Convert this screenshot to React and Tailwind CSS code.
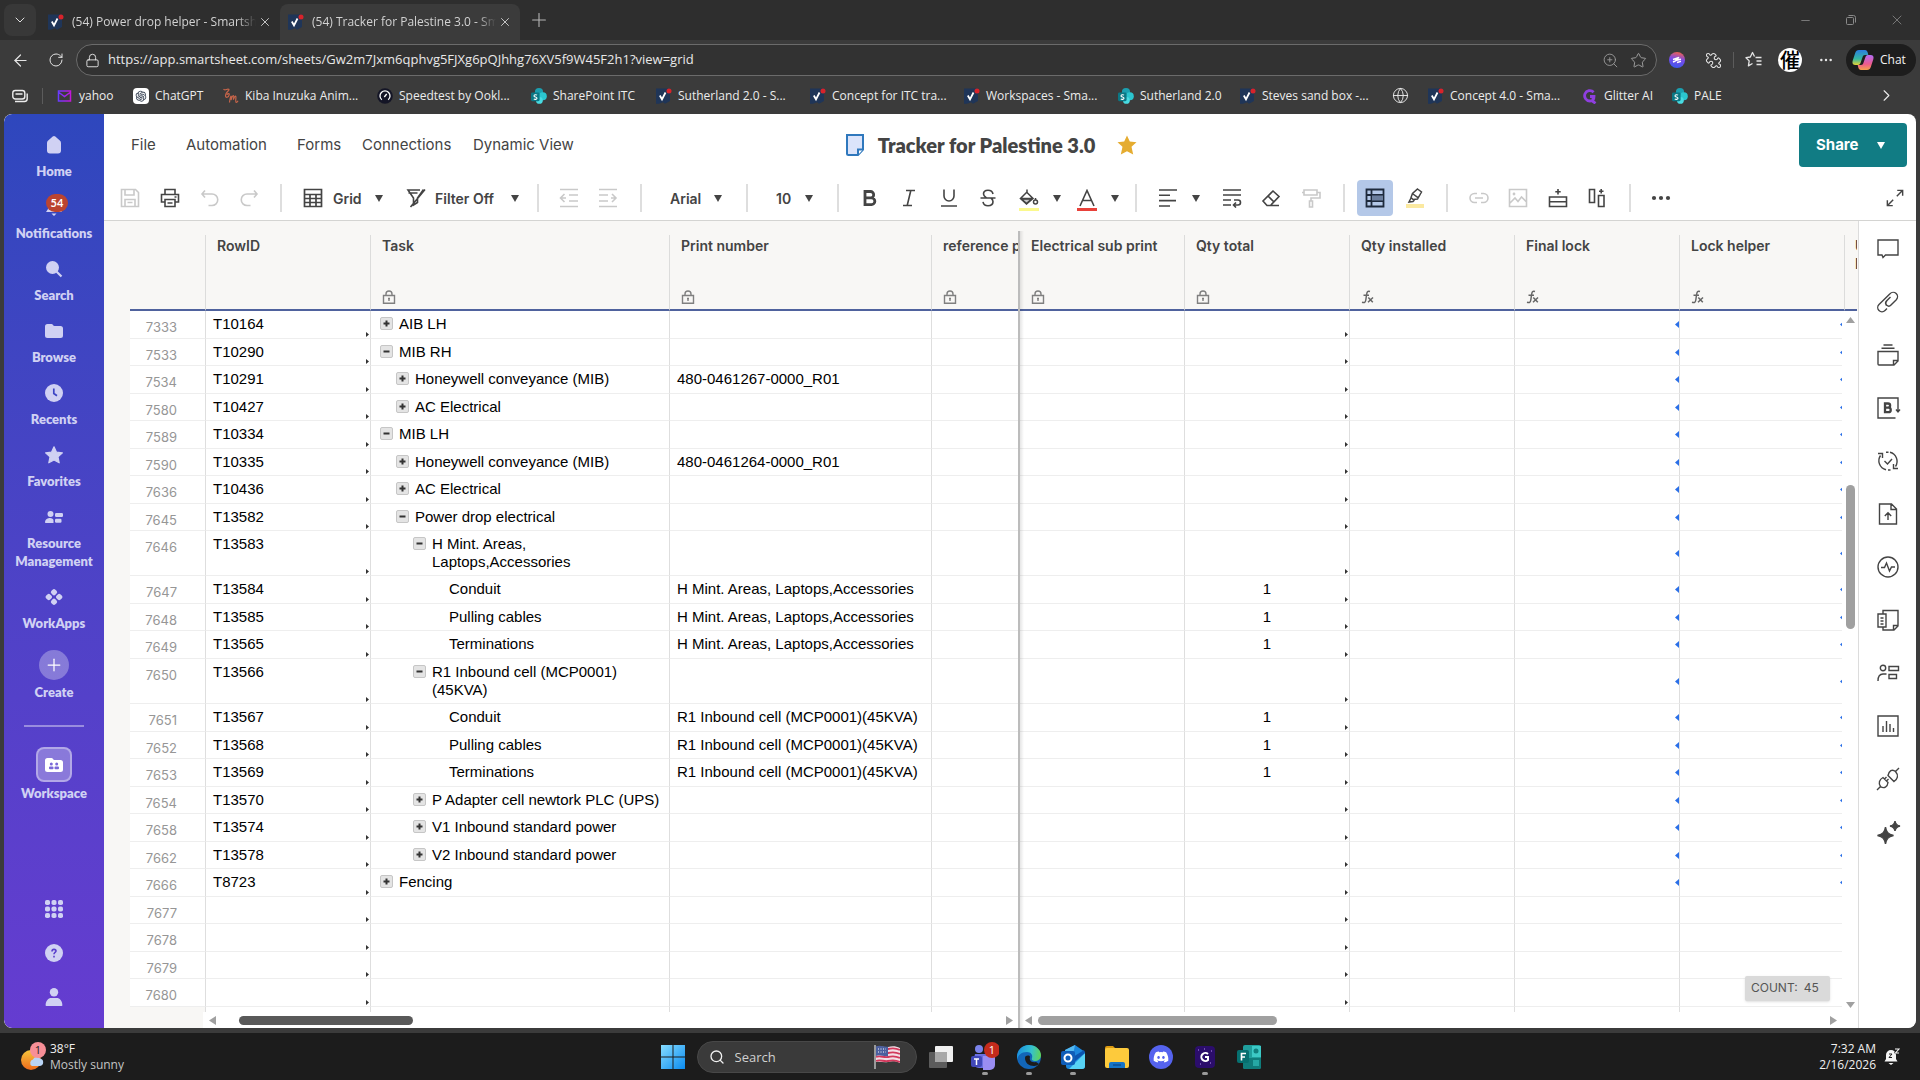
import React from 'react';
import { AiOutlineOpenAI } from 'react-icons/ai';
import { FaDiscord } from 'react-icons/fa';
import {
  ArrowLeft, ChevronDown, ChevronRight, Globe, Lock, Minus, MoreHorizontal, Plus, Puzzle, RotateCw, Search, Star, X, ZoomIn,
} from 'lucide-react';

const UI = "font-['Open_Sans',sans-serif]";
const INTER = "font-['Inter',sans-serif]";
const ARIAL = "font-['Liberation_Sans',Arial,sans-serif]";
const LATO = "font-['Lato',sans-serif]";

/* ---------- small brand marks ---------- */

function SmartsheetMark() {
  return (
    <svg className="h-4 w-4 flex-none" viewBox="0 0 16 16">
      <path d="M0 0.5h14v12.6L9 15.7 7 14.2l-4 1.6H0z" fill="#1f3558" />
      <path d="M3.8 7.500l2.200 3.800L9.500 4.500" fill="none" stroke="#fff" strokeWidth="1.800" />
      <circle cx="13" cy="2.900" r="2.500" fill="#d8232a" />
    </svg>
  );
}

function SharePointMark() {
  return (
    <svg className="h-4 w-4 flex-none" viewBox="0 0 16 16">
      <circle cx="8" cy="4.2" r="4.1" fill="#1b9fb0" />
      <circle cx="11.8" cy="8.2" r="4" fill="#2bc5cf" />
      <circle cx="8.4" cy="12.4" r="3.4" fill="#48dbe2" />
      <rect x="0" y="4.6" width="8.6" height="8.6" rx="1.4" fill="#0b7784" />
      <path d="M6 7.2C5.2 6.5 3 6.6 3 7.9c0 1.4 3 .9 3 2.4 0 1.300-2.400 1.400-3.200.6" fill="none" stroke="#fff" strokeWidth="1.1" />
    </svg>
  );
}

function YahooMark() {
  return (
    <svg className="h-4 w-4 flex-none" viewBox="0 0 16 16">
      <defs>
        <linearGradient id="ymail" x1="0" y1="0" x2="1" y2="0">
          <stop offset="0" stopColor="#6a3bff" />
          <stop offset="1" stopColor="#c316d8" />
        </linearGradient>
      </defs>
      <path d="M1.500 3h12v10h-12zM2 4.500l5.500 4 5.500-4" fill="none" stroke="url(#ymail)" strokeWidth="1.500" />
    </svg>
  );
}

function OpenAiMark() {
  return (
    <span className="flex h-4 w-4 flex-none items-center justify-center rounded-sm bg-white text-gray-700">
      <AiOutlineOpenAI size={14} />
    </span>
  );
}

function CrunchMark() {
  return (
    <svg className="h-4 w-4 flex-none" viewBox="0 0 16 16" fill="none" stroke="#c8654a" strokeWidth="1.200">
      <path d="M.5 1c1.500 2.500 3.500-.8 5.200.3C7 2.500 2.500 4 2.500 7.500c0 3 3.200 2 3.700-.8.3-1.700-2-1.500-2.200.3" />
      <path d="M6.500 14.500c.5-4 1-6.500 1.500-6.500s.5 1.500 0 4c1-3 1.800-4.500 2.500-4.300.6.2.2 2-.2 4 1-2.500 1.800-3.700 2.500-3.500.8.300-.8 5 .2 6 .6.5 1.500-.5 2-1.500" />
    </svg>
  );
}

function SpeedtestMark() {
  return (
    <svg className="h-4 w-4 flex-none" viewBox="0 0 16 16">
      <circle cx="8" cy="8" r="7.800" fill="#141526" />
      <path d="M4.800 11.800a5 5 0 1 1 6.400 0M7.300 9l2.400-3" fill="none" stroke="#fff" strokeWidth="1.300" />
    </svg>
  );
}

function GlitterMark() {
  return (
    <svg className="h-4 w-4 flex-none" viewBox="0 0 16 16" fill="none" stroke="#8f3fe0" strokeWidth="2.800">
      <path d="M11.600 4.200A5.200 5.200 0 1 0 8 13c2.500 0 4-1.500 4-4.500H8M11 9v4.500l2.500 1.800" />
    </svg>
  );
}

/* ---------- browser ---------- */

function Tab({ title, active }) {
  return (
    <div className={active
      ? 'flex h-9 w-60 flex-none items-center rounded-t-lg bg-[#3b3b3b] pl-2 pr-2'
      : 'flex h-9 w-60 flex-none items-center pl-2 pr-2'}>
      <SmartsheetMark />
      <span className="ml-2 w-[184px] overflow-hidden whitespace-nowrap text-xs text-[#d2d2d2] [mask-image:linear-gradient(to_right,black_90%,transparent)]">{title}</span>
      <button aria-label="Close tab" className="ml-auto text-[#d8d8d8]"><X size={14} strokeWidth={1.500} /></button>
    </div>
  );
}

function TabStrip() {
  return (
    <div className="flex h-10 flex-none items-end bg-[#2e2e2e] pl-1">
      <button aria-label="Tab actions" className="mb-1 mr-1 flex h-8 w-8 flex-none items-center justify-center rounded-lg bg-[#383838] text-[#e0e0e0]">
        <ChevronDown size={16} strokeWidth={1.500} />
      </button>
      <Tab title="(54) Power drop helper - Smartshe" />
      <Tab title="(54) Tracker for Palestine 3.0 - Sma" active />
      <button aria-label="New tab" className="mb-[9px] ml-2 text-[#b5b5b5]"><Plus size={22} strokeWidth={1.200} /></button>
      <div className="ml-auto flex h-10 items-center text-[#8a8a8a]">
        <button aria-label="Minimize" className="flex w-[46px] justify-center"><Minus size={13} strokeWidth={1.500} /></button>
        <button aria-label="Restore" className="flex w-[46px] justify-center">
          <svg width="12" height="12" viewBox="0 0 12 12" fill="none" stroke="currentColor"><rect x="1.500" y="3.500" width="7" height="7" rx="1" /><path d="M3.500 1.500h5a2 2 0 0 1 2 2v5" /></svg>
        </button>
        <button aria-label="Close" className="flex w-[46px] justify-center"><X size={16} strokeWidth={1.200} /></button>
      </div>
    </div>
  );
}

function AddressBar() {
  return (
    <div className="flex h-10 flex-none items-center bg-[#3b3b3b] pl-2 pr-1 text-[#e4e4e4]">
      <button aria-label="Back" className="flex w-6 justify-center"><ArrowLeft size={19} strokeWidth={1.500} /></button>
      <button aria-label="Reload" className="ml-3 flex w-6 justify-center"><RotateCw size={16} strokeWidth={1.500} /></button>
      <div className="ml-2 flex h-8 min-w-0 flex-1 items-center rounded-full border border-[#6b6b6b] bg-[#323232] pl-2 pr-1">
        <Lock size={15} strokeWidth={1.500} className="flex-none" />
        <input aria-label="Address" readOnly className="ml-2 min-w-0 flex-1 bg-transparent text-[13px] text-[#e8e8e8] outline-none" defaultValue="https://app.smartsheet.com/sheets/Gw2m7Jxm6qphvg5FJXg6pQJhhg76XV5f9W45F2h1?view=grid" />
        <button aria-label="Zoom" className="flex w-7 justify-center text-[#9a9a9a]"><ZoomIn size={17} strokeWidth={1.300} /></button>
        <button aria-label="Add to favorites" className="flex w-7 justify-center text-[#a5a5a5]"><Star size={17} strokeWidth={1.300} /></button>
      </div>
      <button aria-label="Extension" className="ml-3 flex w-4 justify-center">
        <svg width="16" height="16" viewBox="0 0 16 16">
          <defs><linearGradient id="ext" x1="0.600" y1="0" x2="0.400" y2="1"><stop offset="0" stopColor="#f0604f" /><stop offset="0.450" stopColor="#7a4be8" /><stop offset="1" stopColor="#3d57ee" /></linearGradient></defs>
          <circle cx="8" cy="8" r="8" fill="url(#ext)" />
          <path d="M4 7.500l6-2-3.500 3 5.500-1.200M4 10l2.500-1M8 10.500l4-1.200" stroke="#fff" strokeWidth="1.400" fill="none" />
        </svg>
      </button>
      <button aria-label="Extensions" className="ml-2 flex w-10 justify-center"><Puzzle size={17} strokeWidth={1.500} className="-rotate-90" /></button>
      <span className="h-4 w-px bg-[#5c5c5c]" />
      <button aria-label="Favorites" className="flex w-10 justify-center">
        <svg width="18" height="18" viewBox="0 0 18 18" fill="none" stroke="currentColor" strokeWidth="1.300" strokeLinejoin="round"><path d="M9.500 5.500L7.500 1.500 5.300 6 1 6.700l3.200 3.200-.8 5L7.500 12.500M10.500 6.500h6M11.500 10h5M11.500 13.500h5" /></svg>
      </button>
      <button aria-label="Profile" className="ml-1 flex h-6 w-6 items-center justify-center overflow-hidden rounded-full bg-white font-['Noto_Sans_CJK_JP',sans-serif] text-[20px] font-medium leading-6 text-black">催</button>
      <button aria-label="Settings" className="flex w-12 justify-center"><MoreHorizontal size={16} strokeWidth={1.700} /></button>
      <button className="-ml-1 flex h-8 w-[70px] flex-none items-center rounded-full bg-[#1d1d1d] pl-[6px] text-[12px] text-[#f2f2f2]">
        <svg width="22" height="20" viewBox="0 0 22 20" className="mr-[6px] flex-none">
          <defs>
            <linearGradient id="cop1" x1="0" y1="0" x2="0" y2="1"><stop offset="0" stopColor="#2a7de1" /><stop offset="0.600" stopColor="#35b8a0" /><stop offset="1" stopColor="#e8d434" /></linearGradient>
            <linearGradient id="cop2" x1="0" y1="0" x2="0" y2="1"><stop offset="0" stopColor="#b26cf5" /><stop offset="0.600" stopColor="#ee5a8d" /><stop offset="1" stopColor="#f6a04a" /></linearGradient>
          </defs>
          <path d="M7 0h6c1.500 0 2.300 1 2.700 2.500L16.300 5H13c-1.500 0-2 .8-2.400 2L8.700 12.500C8.200 14 7.500 15 6 15H3.500C1 15 0 13.500.6 11L3.200 3C3.800 1 5 0 7 0z" fill="url(#cop1)" />
          <path d="M15 20H9c-1.500 0-2.300-1-2.700-2.500L5.700 15H9c1.500 0 2-.8 2.400-2l1.900-5.500C13.800 6 14.500 5 16 5h2.500C21 5 22 6.500 21.400 9l-2.600 8C18.200 19 17 20 15 20z" fill="url(#cop2)" />
        </svg>
        Chat
      </button>
    </div>
  );
}

const BOOKMARKS = [
  ['yahoo', YahooMark, 'w-[76px]'],
  ['ChatGPT', OpenAiMark, 'w-[90px]'],
  ['Kiba Inuzuka Anim...', CrunchMark, 'w-[154px]'],
  ['Speedtest by Ookl...', SpeedtestMark, 'w-[154px]'],
  ['SharePoint ITC', SharePointMark, 'w-[125px]'],
  ['Sutherland 2.0 - S...', SmartsheetMark, 'w-[154px]'],
  ['Concept for ITC tra...', SmartsheetMark, 'w-[154px]'],
  ['Workspaces - Sma...', SmartsheetMark, 'w-[154px]'],
  ['Sutherland 2.0', SharePointMark, 'w-[122px]'],
  ['Steves sand box -...', SmartsheetMark, 'w-[152px]'],
  ['', null, 'w-[36px]'],
  ['Concept 4.0 - Sma...', SmartsheetMark, 'w-[154px]'],
  ['Glitter AI', GlitterMark, 'w-[90px]'],
  ['PALE', SharePointMark, 'w-[60px]'],
];

function Bookmarks() {
  return (
    <nav className="flex h-[34px] flex-none items-center overflow-hidden bg-[#3b3b3b] pb-[3px] pl-3 pr-6 text-[#ececec]">
      <svg className="h-4 w-4 flex-none" viewBox="0 0 16 16" fill="none" stroke="currentColor" strokeWidth="1.400"><rect x="0.800" y="2.500" width="12" height="8.500" rx="2.500" /><path d="M3.500 6h7M3 13.500h9.500a2.800 2.800 0 0 0 2.700-2.800V5.500" /></svg>
      <span className="ml-[14px] mr-[14px] h-4 w-px flex-none bg-[#5c5c5c]" />
      {BOOKMARKS.map(([label, Mark, w], i) => (
        <a key={i} href="#" aria-label={label || 'Web page'} className={`flex flex-none items-center gap-[6px] whitespace-nowrap text-xs ${w}`}>
          {Mark ? <Mark /> : <Globe size={17} strokeWidth={1.300} />}
          {label}
        </a>
      ))}
      <button aria-label="More bookmarks" className="ml-auto"><ChevronRight size={19} strokeWidth={1.400} /></button>
    </nav>
  );
}

/* ---------- app side navigation ---------- */

const S = 'h-[18px] w-[18px] fill-current';
const NAV = [
  ['Home', <svg className={S} viewBox="0 0 18 18"><path d="M7.700.6a2.200 2.200 0 0 1 2.600 0l4.500 4C15.600 5.300 16 6 16 7v7.500a3 3 0 0 1-3 3H5a3 3 0 0 1-3-3V7c0-1 .4-1.700 1.200-2.400z" /></svg>],
  ['Notifications', (
    <span className="relative">
      <svg className={S} viewBox="0 0 18 18"><path d="M9 0a6 6 0 0 1 6 6v5l2 3H1l2-3V6a6 6 0 0 1 6-6zM6.500 15.500h5L9 18z" /></svg>
      <span className="absolute -top-1 left-px flex h-[18px] w-[22px] items-center justify-center rounded-full bg-[#bb4430] text-[11px] font-bold text-white">54</span>
    </span>
  )],
  ['Search', <svg className={S} viewBox="0 0 18 18"><circle cx="7.500" cy="7.500" r="6.500" /><path d="M11 11l5.500 5.500" stroke="currentColor" strokeWidth="2.200" /></svg>],
  ['Browse', <svg className={S} viewBox="0 0 18 18"><path d="M2.500 2h4c1.500 0 1.500 2 3 2h6A2.500 2.500 0 0 1 18 6.500v7a2.500 2.500 0 0 1-2.500 2.500h-13A2.500 2.500 0 0 1 0 13.500v-9A2.500 2.500 0 0 1 2.500 2z" /></svg>],
  ['Recents', <svg className={S} viewBox="0 0 18 18"><circle cx="9" cy="9" r="9" /><path d="M8.800 4.500v5l3.200 2.300" stroke="#3c44c4" strokeWidth="1.700" fill="none" /></svg>],
  ['Favorites', <svg className={S} viewBox="0 0 18 18"><path d="M9 .8l2.500 5.400 5.900.7-4.400 4 1.200 5.900L9 14l-5.200 2.800L5 10.900l-4.400-4 5.900-.7z" stroke="currentColor" strokeWidth="1.200" strokeLinejoin="round" /></svg>],
  ['Resource Management', <svg className={S} viewBox="0 0 18 18"><circle cx="5.500" cy="6" r="3" /><path d="M0 14.500c0-3.500 3-4.500 5-4.500s3.500 1 3.500 2.500V15H.5z" /><rect x="10" y="5" width="8" height="4" rx="1.200" /><rect x="10" y="10.800" width="6.500" height="4" rx="1.200" /></svg>],
  ['WorkApps', <svg className={S} viewBox="0 0 18 18"><g><rect x="6.200" y="1.400" width="5.600" height="5.600" rx="2" transform="rotate(45 9 4.200)" /><rect x="6.200" y="11" width="5.600" height="5.600" rx="2" transform="rotate(45 9 13.800)" /><rect x="1" y="6.200" width="5.600" height="5.600" rx="2" transform="rotate(45 3.800 9)" /><rect x="11.400" y="6.200" width="5.600" height="5.600" rx="2" transform="rotate(45 14.200 9)" /></g></svg>],
];

function SideNav() {
  return (
    <nav className={`flex w-[100px] flex-none flex-col items-center rounded-l-lg bg-linear-to-b from-[#2e47bd] to-[#653cd0] pb-[22px] pt-[22px] text-[13px] font-extrabold leading-[18px] text-[#d0d1f3] ${LATO}`}>
      <div className="flex flex-col gap-[18px]">
        {NAV.map(([label, icon]) => (
          <a key={label} href="#" className="flex w-[90px] flex-col items-center gap-2 text-center">
            <span className="flex h-[18px] items-center">{icon}</span>
            <span>{label}</span>
          </a>
        ))}
        <button className="flex flex-col items-center gap-[3px]">
          <span className="flex h-[30px] w-[30px] items-center justify-center rounded-full bg-white/30 text-white"><Plus size={20} strokeWidth={1.500} /></span>
          <span>Create</span>
        </button>
      </div>
      <span className="mt-6 h-[2px] w-[60px] flex-none bg-white/40" />
      <a href="#" className="mt-5 flex flex-col items-center gap-[2px]">
        <span className="flex h-[35px] w-9 items-center justify-center rounded-lg border-2 border-white/35 bg-white/30 text-white">
          <svg className={S} viewBox="0 0 18 18"><path d="M2.500 2h4c1.500 0 1.500 2 3 2h6A2.500 2.500 0 0 1 18 6.500v7a2.500 2.500 0 0 1-2.500 2.500h-13A2.500 2.500 0 0 1 0 13.500v-9A2.500 2.500 0 0 1 2.500 2z" /><g fill="#7a68d8"><circle cx="6.300" cy="8" r="1.500" /><circle cx="11.700" cy="8" r="1.500" /><rect x="4" y="10.500" width="4.500" height="2.800" rx="1" /><rect x="9.500" y="10.500" width="4.500" height="2.800" rx="1" /></g></svg>
        </span>
        <span>Workspace</span>
      </a>
      <div className="mt-auto flex flex-col gap-[26px]">
        <button aria-label="App launcher">
          <svg className={S} viewBox="0 0 18 18">{[0, 6.500, 13].map((x) => [0, 6.500, 13].map((y) => <rect key={x + '-' + y} x={x} y={y} width="5" height="5" rx="1.800" />))}</svg>
        </button>
        <button aria-label="Help">
          <svg className={S} viewBox="0 0 18 18"><circle cx="9" cy="9" r="9" /><path d="M7 7.500c0-3 4-2.600 4-.4 0 1.400-2 1.400-2 3.200M9 11.800v1.700" stroke="#5a40cc" strokeWidth="1.600" fill="none" /></svg>
        </button>
        <button aria-label="Account">
          <svg className={S} viewBox="0 0 18 18"><circle cx="9" cy="4.200" r="4.200" /><path d="M.6 17.500c0-5 3-7.500 5.400-7.500h6c2.400 0 5.400 2.500 5.400 7.500a1 1 0 0 1-1 .5H1.600a1 1 0 0 1-1-.5z" /></svg>
        </button>
      </div>
    </nav>
  );
}

/* ---------- sheet header and toolbar ---------- */

function SheetHeader() {
  const item = 'whitespace-nowrap';
  return (
    <header className="grid h-[62px] flex-none grid-cols-[1fr_auto_1fr] items-center">
      <nav className={`flex items-center pl-[27px] text-[15px] text-[#444] ${INTER}`}>
        <button className={`${item} w-[55px] text-left`}>File</button>
        <button className={`${item} w-[111px] text-left`}>Automation</button>
        <button className={`${item} w-[65px] text-left`}>Forms</button>
        <button className={`${item} w-[111px] text-left`}>Connections</button>
        <button className={item}>Dynamic View</button>
      </nav>
      <div className="flex items-center pr-[38px]">
        <svg width="20" height="24" viewBox="0 0 20 24" fill="#dbe4fb" stroke="#2f78bd" strokeWidth="2"><path d="M2 2h16v14.500L13 22H3.500A1.500 1.500 0 0 1 2 20.500z" /><path d="M18 16.500h-5V22" fill="#fff" /></svg>
        <h1 className={`ml-[13px] whitespace-nowrap text-[20px] font-extrabold text-[#444] ${LATO}`}>Tracker for Palestine 3.0</h1>
        <svg className="ml-[22px]" width="20" height="20" viewBox="0 0 20 20" fill="#e5ac30"><path d="M10 .5l2.800 6 6.700.7-5 4.500 1.700 7.800L10 16.200l-6.200 3.300 1.700-7.800-5-4.500 6.700-.7z" /></svg>
      </div>
      <div className="flex justify-end pr-[9px]">
        <button className={`flex h-11 w-[108px] items-center rounded bg-[#117c84] pl-[17px] text-[15px] font-bold text-white ${INTER}`}>
          Share<Caret className="ml-[18px]" />
        </button>
      </div>
    </header>
  );
}

function Caret({ className = '' }) {
  return <svg className={`flex-none ${className}`} width="8" height="7" viewBox="0 0 8 7" fill="currentColor"><path d="M0 0h8L4 7z" /></svg>;
}

function Sep({ w = 'w-[26px]' }) {
  return <span className={`flex flex-none justify-center ${w}`}><span className="h-7 w-[2px] bg-[#dedede]" /></span>;
}

function Tool({ w = 'w-10', dim, label, children, size = 20 }) {
  return (
    <button aria-label={label} className={`flex flex-none justify-center ${w} ${dim ? 'text-[#c9c9c9]' : 'text-[#444]'}`}>
      <svg width={size} height={size} viewBox="0 0 20 20" fill="none" stroke="currentColor" strokeWidth="1.600">{children}</svg>
    </button>
  );
}

function CaretTool({ label, w = 'w-[18px]' }) {
  return <button aria-label={label} className={`flex flex-none justify-center text-[#444] ${w}`}><Caret /></button>;
}

function Toolbar() {
  return (
    <div className={`flex h-[45px] flex-none items-center border-b border-[#d4d4d2] pl-[6px] text-[14px] font-semibold text-[#444] ${INTER}`}>
      <Tool label="Save" dim><path d="M1.500 1.500h14l3 3v14h-17zM5 1.500v5.500h9v-5.500M5 18.500v-7h10v7M7.500 14.500h5" /></Tool>
      <Tool label="Print"><path d="M5 6V1.500h10V6M5 14H1.500V6.500h17V14H15M5 11.500h10v7H5zM7.500 15h5M14.500 9h2" /></Tool>
      <Tool label="Undo" dim><path d="M5 2.500L2 6l3 3.500M2 6h10a5.500 5.500 0 0 1 0 11.500H8.500" /></Tool>
      <Tool label="Redo" dim w="w-[38px]"><path d="M15 2.500L18 6l-3 3.500M18 6H8a5.500 5.500 0 0 0 0 11.500h3.500" /></Tool>
      <Sep />
      <button className="flex flex-none items-center">
        <svg className="mx-[9px]" width="20" height="20" viewBox="0 0 20 20" fill="none" stroke="currentColor" strokeWidth="1.700"><path d="M1.500 1.500h17v17h-17zM1.500 6.500h17M1.500 10.500h17M1.500 14.500h17M7 6.500v12M13 6.500v12" /></svg>
        <span className="w-[43px] pl-px text-left">Grid</span><Caret />
      </button>
      <button className="ml-[23px] flex flex-none items-center">
        <svg className="mr-[9px]" width="20" height="20" viewBox="0 0 20 20" fill="none" stroke="currentColor" strokeWidth="1.600"><path d="M14 2H2l5.500 8v7l4-2.500V10L17.500 1.500M19 1.500L4.500 19M2.500 5h9" /></svg>
        <span className="w-[76px] whitespace-nowrap text-left">Filter Off</span><Caret />
      </button>
      <span className="w-[7px] flex-none" />
      <Sep w="w-[24px]" />
      <Tool label="Outdent" dim w="w-[38px]"><path d="M1 1.500h18M10 7h9M10 13h9M1 18.500h18M5.500 6L1.500 10l4 4M2 10h5" /></Tool>
      <Tool label="Indent" dim><path d="M1 1.500h18M1 7h9M1 13h9M1 18.500h18M14 6l4 4-4 4M13 10h5" /></Tool>
      <Sep />
      <label className="relative flex h-7 w-20 flex-none items-center">
        <select aria-label="Font" className="h-7 w-full appearance-none bg-transparent pl-4 outline-none"><option>Arial</option></select>
        <Caret className="pointer-events-none absolute right-3" />
      </label>
      <Sep />
      <label className="relative flex h-7 w-[65px] flex-none items-center">
        <select aria-label="Font size" className="h-7 w-full appearance-none bg-transparent pl-4 outline-none"><option>10</option></select>
        <Caret className="pointer-events-none absolute right-3" />
      </label>
      <Sep />
      <Tool label="Bold" w="w-[38px]"><path d="M5 3.500h5.500a3.200 3.200 0 0 1 0 6.400H5zM5 9.900h6.500a3.300 3.300 0 0 1 0 6.700H5z" strokeWidth="2.800" /></Tool>
      <Tool label="Italic"><path d="M7 2.500h9M4 17.500h9M11.800 2.500l-3.600 15" /></Tool>
      <Tool label="Underline"><path d="M5 1.500V8a5 5 0 0 0 10 0V1.500M2 18h16" /></Tool>
      <Tool label="Strikethrough" w="w-[38px]"><path d="M15 6c-.5-2.500-2.200-3.700-5-3.700S5.500 3.700 5.500 6c0 2 1.500 3 3 4M5 13.800c.5 2.500 2.200 3.900 5 3.900s5-1.500 5-3.900c0-1.500-.5-2.700-2-3.800M2.500 10h15" /></Tool>
      <span className="w-[3px] flex-none" />
      <button aria-label="Fill color" className="flex w-[38px] flex-none flex-col items-center pt-[3px]">
        <svg width="20" height="18" viewBox="0 0 20 18" fill="none" stroke="currentColor" strokeWidth="1.500"><path d="M7.500 3l6.500 6.500L7.500 15 1.500 9.500 8 3V.500M2 9.500h11.500" /><path d="M2.500 10h10l-5 4.500z" fill="currentColor" fillOpacity="0.300" /><circle cx="16.500" cy="13" r="2" /><path d="M16.500 9v2" /></svg>
        <span className="mt-px h-[3px] w-5 bg-[#fbf98e]" />
      </button>
      <CaretTool label="Choose fill color" />
      <span className="w-[2px] flex-none" />
      <button aria-label="Text color" className="flex w-[38px] flex-none flex-col items-center pt-[3px]">
        <svg width="20" height="18" viewBox="0 0 20 18" fill="none" stroke="currentColor" strokeWidth="1.600"><path d="M3 17L10 1.500 17 17M5.500 11.500h9" /></svg>
        <span className="mt-px h-[3px] w-5 bg-[#e8413a]" />
      </button>
      <CaretTool label="Choose text color" w="w-[17px]" />
      <Sep />
      <Tool label="Align" w="w-[38px]"><path d="M1 2h18M1 7.300h11M1 12.600h17M1 18h11" /></Tool>
      <CaretTool label="Choose alignment" />
      <span className="w-2 flex-none" />
      <Tool label="Wrap text" w="w-[38px]"><path d="M1 2h18M1 7h18M1 12h8M1 17h8M12 12h4a2.500 2.500 0 0 1 0 5h-4M14 14.500L11.500 17l2.500 2.500" /></Tool>
      <Tool label="Clear format"><path d="M12 3l6 5.500-8.500 9H6l-4-4.500zM7 8l6 6M9.500 17.500H18" /></Tool>
      <Tool label="Format painter" dim><path d="M3 2h13v5H3zM16 4.500h3v5.500H10v3M8.500 13h3v6h-3zM3 4.500H1" /></Tool>
      <Sep />
      <button aria-label="Highlight changes grid" className="flex h-9 w-9 flex-none items-center justify-center rounded bg-[#b4c8e8] text-[#1e2a3c]">
        <svg width="20" height="20" viewBox="0 0 20 20" fill="none" stroke="currentColor" strokeWidth="1.800"><path d="M1.500 1.500h17v17h-17zM1.500 7h17M1.500 13h17M6.500 1.500v17" /><path d="M7 7.500h11v5H7z" fill="#6c7f9e" stroke="none" /></svg>
      </button>
      <span className="w-[3px] flex-none" />
      <button aria-label="Highlight changes" className="flex w-[38px] flex-none flex-col items-center">
        <svg width="18" height="16" viewBox="0 0 18 16" fill="none" stroke="currentColor" strokeWidth="1.500"><path d="M11.500 1l4 3-4 7-4.500.5-2-2 1.500-4zM7 6l5 3.700M5 10l-2 4 4-.5L8.500 12" /></svg>
        <span className="h-1 w-[18px] bg-[#fbe9a0]" />
      </button>
      <Sep w="w-[25px]" />
      <Tool label="Link" dim w="w-[39px]"><path d="M8 5.500H5.500a4.500 4.500 0 0 0 0 9H8M12 5.500h2.500a4.500 4.500 0 0 1 0 9H12M6 10h8" /></Tool>
      <Tool label="Image" dim><path d="M1.500 1.500h17v17h-17zM2 15l5-5 3 3.500 3.500-4.500 5 5" /><circle cx="6" cy="6" r=".6" /></Tool>
      <Tool label="Insert row" w="w-[39px]"><path d="M1.500 9h17v9.500h-17zM1.500 13.800h17M10 1v5.500M7.300 3.700h5.400" /></Tool>
      <Tool label="Insert column"><path d="M2.500 1.500h5v13h-5zM11.500 7.500h5.500v11h-5.500zM14.200 1v4.500M12 3.200h4.500" /></Tool>
      <Sep w="w-[25px]" />
      <Tool label="More" w="w-[38px]"><g fill="currentColor" stroke="none"><circle cx="3" cy="10" r="2.100" /><circle cx="10" cy="10" r="2.100" /><circle cx="17" cy="10" r="2.100" /></g></Tool>
      <span className="ml-auto flex pr-[2px]"><Tool label="Expand" w="w-[38px]" size={18}><path d="M12.500 1.500h6v6M18 2l-6 6M7.500 18.500h-6v-6M2 18l6-6" /></Tool></span>
    </div>
  );
}

/* ---------- grid ---------- */

const P1 = 'H Mint. Areas, Laptops,Accessories';
const P2 = 'R1 Inbound cell (MCP0001)(45KVA)';
// row number, id, indent level, toggle, task, print number, quantity, height
const ROWS = [
  ['7333', 'T10164', 0, '+', 'AIB LH', '', '', 'h-[28px]'],
  ['7533', 'T10290', 0, '-', 'MIB RH', '', '', 'h-[27px]'],
  ['7534', 'T10291', 1, '+', 'Honeywell conveyance (MIB)', '480-0461267-0000_R01', '', 'h-[28px]'],
  ['7580', 'T10427', 1, '+', 'AC Electrical', '', '', 'h-[27px]'],
  ['7589', 'T10334', 0, '-', 'MIB LH', '', '', 'h-[28px]'],
  ['7590', 'T10335', 1, '+', 'Honeywell conveyance (MIB)', '480-0461264-0000_R01', '', 'h-[27px]'],
  ['7636', 'T10436', 1, '+', 'AC Electrical', '', '', 'h-[28px]'],
  ['7645', 'T13582', 1, '-', 'Power drop electrical', '', '', 'h-[27px]'],
  ['7646', 'T13583', 2, '-', 'H Mint. Areas, Laptops,Accessories', '', '', 'h-[45px]'],
  ['7647', 'T13584', 3, '', 'Conduit', P1, '1', 'h-[28px]'],
  ['7648', 'T13585', 3, '', 'Pulling cables', P1, '1', 'h-[27px]'],
  ['7649', 'T13565', 3, '', 'Terminations', P1, '1', 'h-[28px]'],
  ['7650', 'T13566', 2, '-', 'R1 Inbound cell (MCP0001) (45KVA)', '', '', 'h-[45px]'],
  ['7651', 'T13567', 3, '', 'Conduit', P2, '1', 'h-[28px]'],
  ['7652', 'T13568', 3, '', 'Pulling cables', P2, '1', 'h-[27px]'],
  ['7653', 'T13569', 3, '', 'Terminations', P2, '1', 'h-[28px]'],
  ['7654', 'T13570', 2, '+', 'P Adapter cell newtork PLC (UPS)', '', '', 'h-[27px]'],
  ['7658', 'T13574', 2, '+', 'V1 Inbound standard power', '', '', 'h-[28px]'],
  ['7662', 'T13578', 2, '+', 'V2 Inbound standard power', '', '', 'h-[27px]'],
  ['7666', 'T8723', 0, '+', 'Fencing', '', '', 'h-[28px]'],
  ['7677', '', 0, '', '', '', '', 'h-[27px]'],
  ['7678', '', 0, '', '', '', '', 'h-[28px]'],
  ['7679', '', 0, '', '', '', '', 'h-[27px]'],
  ['7680', '', 0, '', '', '', '', 'h-[28px]'],
];
const INDENT = ['pl-[9px]', 'pl-[25px]', 'pl-[42px]', 'pl-[78px]'];

function LockGlyph() {
  return (
    <svg width="14" height="14" viewBox="0 0 14 14" fill="none" stroke="#808080" strokeWidth="1.400"><path d="M1.500 5.500h11v7.800h-11zM4 5.500V4a3 3 0 0 1 6 0v1.500M7 8v3M6 8.500h2" /></svg>
  );
}

function FxGlyph() {
  return (
    <svg width="14" height="14" viewBox="0 0 14 14" fill="none" stroke="#666" strokeWidth="1.500"><path d="M9 1.500C6.500.800 6 2 5.600 4.500L4.800 10c-.4 2.500-1.300 3-3.800 2.300M2.500 5.200h5.500M7.300 7.500l4.500 4.800M12 7.500l-5 4.800" /></svg>
  );
}

function HeadCell({ children, glyph, line = true, last }) {
  return (
    <th scope="col" className={`border-b-2 border-b-[#4f629d] p-0 text-left font-semibold ${line ? 'border-l border-l-[#dcdcdb]' : ''}`}>
      <div className={`flex h-[74px] flex-col justify-between overflow-hidden whitespace-nowrap pb-[5px] pt-[2px] leading-[18px] ${last ? 'pl-[10px]' : 'pl-[11px]'}`}>
        <span>{children}</span>
        {glyph === 'lock' && <LockGlyph />}
        {glyph === 'fx' && <FxGlyph />}
      </div>
    </th>
  );
}

const CELL = 'relative overflow-hidden border-b border-l border-b-[#eeeeee] border-l-[#dedede] bg-white p-0 align-top';

function GreyMark() {
  return <svg className="absolute bottom-px right-px" width="3" height="5" viewBox="0 0 3 5"><path d="M0 0l3 2.500L0 5z" fill="#333" /></svg>;
}

function BlueMark() {
  return <span className="absolute inset-y-0 right-0 flex items-center"><svg width="4" height="7" viewBox="0 0 4 7"><path d="M4 0v7L0 3.500z" fill="#2a6fe8" /></svg></span>;
}

function Toggle({ kind }) {
  return (
    <button aria-label={kind === '+' ? 'Expand row' : 'Collapse row'} className="mt-[2px] h-[13px] w-[13px] flex-none rounded-[2px] border border-[#c6c6c6] bg-[#e4e4e4]">
      <svg width="11" height="11" viewBox="0 0 11 11" stroke="#333" strokeWidth="2">
        <path d={kind === '+' ? 'M2.500 5.500h6M5.500 2.500v6' : 'M2.500 5.500h6'} />
      </svg>
    </button>
  );
}

function FrozenTable() {
  return (
    <table className="w-[888px] flex-none table-fixed border-separate border-spacing-0">
      <colgroup><col className="w-[75px]" /><col className="w-[165px]" /><col className="w-[299px]" /><col className="w-[262px]" /><col className="w-[87px]" /></colgroup>
      <thead className={`text-[14px] text-[#444] ${INTER}`}>
        <tr>
          <HeadCell line={false} />
          <HeadCell>RowID</HeadCell>
          <HeadCell glyph="lock">Task</HeadCell>
          <HeadCell glyph="lock">Print number</HeadCell>
          <HeadCell glyph="lock">reference print</HeadCell>
        </tr>
      </thead>
      <tbody className={`text-[15px] leading-[18px] text-black ${ARIAL}`}>
        {ROWS.map(([num, id, level, toggle, task, print, , h]) => (
          <tr key={num}>
            <td className={`border-b border-b-[#eeeeee] bg-white p-0 pr-[28px] pt-[7px] text-right align-top text-[13px] leading-[18px] text-[#969696] ${INTER} ${h}`}>{num}</td>
            <td className={`${CELL} pl-[7px] pt-1`}>{id}<GreyMark /></td>
            <td className={`${CELL} pt-1`}>
              <div className={`flex gap-[6px] ${INDENT[level]}`}>
                {toggle && <Toggle kind={toggle} />}
                <span className={h === 'h-[45px]' ? 'w-[190px]' : 'whitespace-nowrap'}>{task}</span>
              </div>
            </td>
            <td className={`${CELL} whitespace-nowrap pl-[7px] pt-1`}>{print}</td>
            <td className={CELL} />
          </tr>
        ))}
        <tr>
          <td className="h-[5px] p-0" />
          {[0, 1, 2, 3].map((i) => <td key={i} className="border-l border-l-[#dedede] bg-white p-0" />)}
        </tr>
      </tbody>
    </table>
  );
}

function ScrollTable() {
  return (
    <table className="w-[995px] table-fixed border-separate border-spacing-0">
      <colgroup><col className="w-[164px]" /><col className="w-[165px]" /><col className="w-[165px]" /><col className="w-[165px]" /><col className="w-[165px]" /><col /></colgroup>
      <thead className={`text-[14px] text-[#444] ${INTER}`}>
        <tr>
          <HeadCell glyph="lock" line={false}>Electrical sub print</HeadCell>
          <HeadCell glyph="lock">Qty total</HeadCell>
          <HeadCell glyph="fx">Qty installed</HeadCell>
          <HeadCell glyph="fx">Final lock</HeadCell>
          <HeadCell glyph="fx">Lock helper</HeadCell>
          <HeadCell last>U<br />L</HeadCell>
        </tr>
      </thead>
      <tbody className={`text-[15px] leading-[18px] text-black ${ARIAL}`}>
        {ROWS.map(([num, id, , , , , qty, h]) => (
          <tr key={num}>
            <td className={`border-b border-b-[#eeeeee] bg-white p-0 ${h}`} />
            <td className={`${CELL} pt-1 text-center`}>{qty}<GreyMark /></td>
            <td className={CELL} />
            <td className={CELL}>{id && <BlueMark />}</td>
            <td className={CELL}>{id && <BlueMark />}</td>
            <td className={CELL} />
          </tr>
        ))}
        <tr>
          <td className="h-[5px] bg-white p-0" />
          {[0, 1, 2, 3, 4].map((i) => <td key={i} className="border-l border-l-[#dedede] bg-white p-0" />)}
        </tr>
      </tbody>
    </table>
  );
}

function Arrow({ d }) {
  return <svg className="flex-none" width="9" height="9" viewBox="0 0 9 9" fill="#a0a0a0"><path d={d} /></svg>;
}
const LEFT = 'M8 0v9L1 4.500z';
const RIGHT = 'M1 0v9l7-4.500z';

function Grid() {
  return (
    <div className="flex min-w-0 flex-1 bg-[#f8f7f5] pl-[26px]">
      <div className="flex w-[888px] flex-none flex-col pt-[14px]">
        <FrozenTable />
        <div className="ml-[73px] flex flex-1 items-center bg-white pl-[5px] pr-1">
          <Arrow d={LEFT} />
          <span className="ml-[22px] h-[9px] w-[174px] rounded-full bg-[#595959]" />
          <span className="ml-auto flex"><Arrow d={RIGHT} /></span>
        </div>
      </div>
      <div className="mt-[10px] w-[2px] flex-none bg-[#bcbcbc]" />
      <div className="relative flex min-w-0 flex-1 flex-col overflow-hidden pt-[14px]">
        <div className="mr-px overflow-hidden"><ScrollTable /></div>
        <div className="flex flex-1 items-center bg-white pl-1 pr-5">
          <Arrow d={LEFT} />
          <span className="ml-[5px] h-[9px] w-[239px] rounded-full bg-[#a0a0a0]" />
          <span className="ml-auto flex"><Arrow d={RIGHT} /></span>
        </div>
        <div className="absolute bottom-0 left-0 top-[10px] w-1 bg-linear-to-r from-black/10 to-transparent" />
        <div className="absolute bottom-[15px] right-0 top-[90px] flex w-4 flex-col items-center bg-white pb-1 pt-[5px]">
          <Arrow d="M0 7L4.500 1 9 7z" />
          <span className="mt-[160px] h-36 w-[9px] rounded-full bg-[#a0a0a0]" />
          <span className="mt-auto"><Arrow d="M0 2l4.500 6L9 2z" /></span>
        </div>
        <div className={`absolute bottom-[27px] right-[28px] flex h-[25px] w-[85px] items-center gap-[6px] rounded-[2px] bg-[#dadada] pb-px pl-[6px] text-[12px] text-[#555] shadow-sm ${INTER}`}>
          <span>COUNT:</span><span>45</span>
        </div>
      </div>
    </div>
  );
}

/* ---------- right icon rail ---------- */

const RAIL = [
  ['Conversations', <path d="M1 2h20v15H8.500L6 19.500 5 17H1z" />],
  ['Attachments', <path d="M9.500 14.500a4 4 0 0 1 .5-5l3.500-3.500M10 17.500l-2 2a4 4 0 0 1-6-6L13 2.700a4.300 4.300 0 0 1 6.300 6L14 14a3 3 0 0 1-4.500-4l4-4" />],
  ['Proofs', <path d="M1 7.500h20V17l-4 4H2a1 1 0 0 1-1-1zM16.500 21v-4.500H21M4.500 4.300h13M6.500 1h9" />],
  ['Brandfolder', <><path d="M18.500 21H1V1h20v13M19 12.500l2 2.500 2-2.500" /><path d="M8 6.500h3a2.100 2.100 0 0 1 0 4.200H8zM8 10.700h3.500a2.200 2.200 0 0 1 0 4.500H8z" strokeWidth="2.300" /></>],
  ['Update requests', <><path d="M3.500 5.500A9.300 9.300 0 0 0 9 19.800M13 2.300a9.300 9.300 0 0 1 5.500 14.200M9 2.200h2.500M11 20h2.500" /><path d="M1 3.500h4.500V8M21 18.500h-4.500V14M7.500 11l3 3 4.500-5" /></>],
  ['Publish', <path d="M2.500 1h12l5 5v15h-17zM14 1v5.500h5.500M11 17v-7M7.800 13L11 9.800l3.200 3.200" />],
  ['Activity log', <><circle cx="11" cy="11" r="10" /><path d="M4 11.500h3.500l2-4.500 3 8 2-4H18" /></>],
  ['Summary', <path d="M6 5V1.500h15V17l-4 4H6v-3M16.500 21v-4.500H21M1 5h8v13H1zM3.500 9h3M3.500 12h3M3.500 15h3" />],
  ['Resources', <><circle cx="6" cy="6" r="2.700" /><path d="M1 19c0-5 2-7 5-7h3.500M12 4.500h9.500v4H12zM12 12.500h7.500v4H12z" /></>],
  ['Charts', <path d="M1 1h20v20H1zM6 17v-6M9.500 17V6M13 17V9M16.500 17v-4" />],
  ['Connectors', <path d="M0 22l3.500-3.500M22 0l-3.500 3.500M11 7.500l6 6c3.500-2.500 5-6 1.500-10C15 .5 12 3 11 7.500zM11 14.500L6 9.500c-3.500 2-5 5.500-2.500 9 3.500 2.500 7 .5 7.500-4zM9.500 13l2-2M7.500 11l2-2" />],
  ['Assistant', <path d="M8.500 6c.8 5 2.500 7.200 8 8.500-5.500 1-7.200 3.500-8 8.500-.8-5-2.500-7.500-8-8.500 5.500-1.300 7.200-3.500 8-8.500zM18 0c.5 3 1.500 4.500 5 5-3.500.8-4.500 2-5 5-.5-3-1.500-4.200-5-5 3.500-.5 4.500-2 5-5z" fill="currentColor" />],
];

function Rail() {
  return (
    <aside className="flex w-[58px] flex-none flex-col items-center gap-[31px] rounded-br-lg border-l border-[#dcdcdc] bg-white pt-[17px] text-[#444]">
      {RAIL.map(([label, shape]) => (
        <button key={label} aria-label={label}>
          <svg width="22" height="22" viewBox="0 0 22 22" fill="none" stroke="currentColor" strokeWidth="1.400" className="overflow-visible">{shape}</svg>
        </button>
      ))}
    </aside>
  );
}

/* ---------- taskbar ---------- */

const slot = 'relative flex h-full w-11 flex-none items-center justify-center';

function Running() {
  return <span className="absolute bottom-[5px] left-1/2 h-[3px] w-[6px] -translate-x-1/2 rounded-full bg-[#9a9a9a]" />;
}

function Taskbar() {
  return (
    <footer className="grid h-[47px] flex-none grid-cols-[1fr_auto_1fr] items-center bg-[#1c1c1c] text-xs leading-4 text-[#f0f0f0]">
      <div className="flex items-center pl-5">
        <svg width="26" height="30" viewBox="0 0 26 30">
          <defs><linearGradient id="sun" x1="0" y1="0" x2="0" y2="1"><stop offset="0" stopColor="#f8c63c" /><stop offset="1" stopColor="#ee6a1c" /></linearGradient></defs>
          <circle cx="11" cy="18" r="10" fill="url(#sun)" />
          <path d="M12 24a3.500 3.500 0 0 1 1-6.500 4 4 0 0 1 7-1 3.800 3.800 0 0 1 0 7.500z" fill="#b9d4f5" />
          <circle cx="18" cy="8" r="8" fill="#f78f97" />
          <text x="18" y="12" textAnchor="middle" fontSize="11" fill="#222" className={UI}>1</text>
        </svg>
        <div className="ml-1"><div>38°F</div><div className="text-[#c4c4c4]">Mostly sunny</div></div>
      </div>
      <div className="flex h-[47px] items-center pl-[11px]">
        <button aria-label="Start" className="mr-3 flex-none">
          <svg width="24" height="24" viewBox="0 0 24 24">
            <defs><linearGradient id="win" x1="0" y1="0" x2="1" y2="1"><stop offset="0" stopColor="#86dcff" /><stop offset="1" stopColor="#0a8bf0" /></linearGradient></defs>
            <path d="M0 0h11.500v11.500H0zM12.500 0H24v11.500H12.500zM0 12.500h11.500V24H0zM12.500 12.500H24V24H12.500z" fill="url(#win)" />
          </svg>
        </button>
        <label className="flex h-8 w-[220px] flex-none items-center rounded-full border border-[#484848] bg-[#3a3a3a] pl-[11px] pr-4">
          <Search size={16} strokeWidth={2} className="flex-none" />
          <input aria-label="Search" placeholder="Search" className="ml-[10px] w-full min-w-0 bg-transparent text-[13px] outline-none placeholder:text-[#d0d0d0]" />
          <svg width="26" height="24" viewBox="0 0 26 24" className="flex-none">
            <path d="M2 2c4-2 8 1 12 0s8-1 12 1v15c-4-2-8-2-12-1s-8-1-12 0z" fill="#f2dfe6" />
            <path d="M2 4c4-2 8 1 12 0s8-1 12 1M2 8c4-2 8 1 12 0s8-1 12 1M2 12c4-2 8 1 12 0s8-1 12 1M2 16c4-2 8 1 12 0s8-1 12 1" fill="none" stroke="#d2395c" strokeWidth="1.900" />
            <path d="M2 1.500c4-2 7 .5 12 .2V11C10 12 6 9 2 11z" fill="#4b5f9e" />
            <path d="M4 4h8M4 7h8" stroke="#fff" strokeWidth="1" strokeDasharray="1 1.500" />
            <path d="M1 0v24" stroke="#bbb" strokeWidth="1.500" />
          </svg>
        </label>
        <button aria-label="Task view" className="ml-[2px] flex h-full w-11 flex-none items-center justify-center">
          <svg width="24" height="24" viewBox="0 0 24 24"><rect x="6" y="1" width="18" height="16" rx="1" fill="#f0f0f0" /><rect x="0" y="7" width="18" height="16" rx="1" fill="#5c5c5c" /><rect x="6" y="7" width="12" height="10" fill="#a8a8a8" /></svg>
        </button>
        <button aria-label="Teams" className={slot}>
          <svg width="28" height="30" viewBox="0 0 28 30"><circle cx="8" cy="7" r="4" fill="#7b83eb" /><path d="M4 12h12v14H8a6 6 0 0 1-6-6z" fill="#6a6fe0" /><path d="M12 14h12v9a5 5 0 0 1-5 5h-7z" fill="#9a8df2" /><rect x="0" y="14" width="11" height="11" rx="2" fill="#4148b8" /><path d="M3 17h5M5.500 17v6" stroke="#fff" strokeWidth="1.500" /><circle cx="21" cy="8" r="8" fill="#c42b1c" /><text x="21" y="12" textAnchor="middle" fontSize="11" fill="#fff" className={UI}>1</text></svg>
          <Running />
        </button>
        <button aria-label="Edge" className={slot}>
          <svg width="24" height="24" viewBox="0 0 24 24">
            <defs><linearGradient id="edge" x1="0" y1="0.300" x2="1" y2="0.400"><stop offset="0" stopColor="#1a8fe0" /><stop offset="0.600" stopColor="#35c1cf" /><stop offset="1" stopColor="#5fd35a" /></linearGradient></defs>
            <circle cx="12" cy="12" r="12" fill="#1266b8" />
            <path d="M0 12C0 5 5 0 12 0c7 0 12 5 12 10 0 4-3 6-6 6-2 0-4-1-3-3 1-3-1-6-5-6-6 0-9 3-10 8z" fill="url(#edge)" />
            <path d="M8 13c0 5 4 8 9 8 2 0 4-1 5-2l-3-2c-5 1-7-2-6-5 0-2-5-2-5 1z" fill="#1c1c1c" />
          </svg>
          <Running />
        </button>
        <button aria-label="Outlook" className={slot}>
          <svg width="24" height="26" viewBox="0 0 24 26"><path d="M4 6l10-5 10 7v14a3 3 0 0 1-3 3H8a3 3 0 0 1-3-3z" fill="#1b86dc" /><path d="M24 9L8 25h13a3 3 0 0 0 3-3z" fill="#57d3f5" /><path d="M14 1L4 6v6l8-1z" fill="#52b8f0" /><path d="M12 13L23 6l1 3-11 9z" fill="#0b55b0" /><rect x="0" y="7" width="14" height="14" rx="2" fill="#0f5db8" /><circle cx="7" cy="14" r="3.500" fill="none" stroke="#fff" strokeWidth="2" /></svg>
          <Running />
        </button>
        <button aria-label="File Explorer" className={slot}>
          <svg width="24" height="24" viewBox="0 0 24 24"><path d="M0 3a2 2 0 0 1 2-2h6l3 3v6H0z" fill="#dc9a12" /><rect x="0" y="3" width="24" height="20" rx="2" fill="#fdca3c" /><path d="M4 23v-4a2 2 0 0 1 2-2h12a2 2 0 0 1 2 2v4z" fill="#1474c8" /><path d="M8 20h8" stroke="#0b4f94" strokeWidth="1.500" /></svg>
        </button>
        <button aria-label="Discord" className={slot}>
          <span className="flex h-6 w-6 items-center justify-center rounded-full bg-[#5563ee]"><FaDiscord size={16} color="#fff" /></span>
        </button>
        <button aria-label="Glitter" className={slot}>
          <svg width="20" height="22" viewBox="0 0 20 22"><rect width="20" height="22" rx="4" fill="#2b0d6b" /><path d="M13 8a4 4 0 1 0 0 6v-3h-3" fill="none" stroke="#fff" strokeWidth="2" /><path d="M3 4h1M16 5h1M5 18h1M15 17h1M9 3h1" stroke="#b58cf5" strokeWidth="1" /></svg>
          <Running />
        </button>
        <button aria-label="Forms" className={slot}>
          <svg width="24" height="24" viewBox="0 0 24 24"><rect x="6" y="0" width="18" height="24" rx="2" fill="#1f9e9c" /><rect x="15" y="1" width="9" height="11" fill="#3cc9c6" /><circle cx="19" cy="6" r="2.500" fill="#11807f" /><path d="M6 13h18v9a2 2 0 0 1-2 2H8a2 2 0 0 1-2-2z" fill="#0f7c7b" /><rect x="16" y="15" width="6" height="6" fill="#25a8a5" /><rect x="0" y="5" width="12" height="13" rx="2" fill="#067070" /><path d="M4.500 15.500v-7h4.500M4.500 12h3.500" stroke="#fff" strokeWidth="1.600" fill="none" /></svg>
        </button>
      </div>
      <div className="flex items-center justify-end pr-5">
        <div className="text-right"><div>7:32 AM</div><div>2/16/2026</div></div>
        <svg className="ml-2" width="16" height="18" viewBox="0 0 16 18"><path d="M7 2a5 5 0 0 1 5 5v4l1.500 2.500H.500L2 11V7a5 5 0 0 1 5-5zM4.500 15h5L7 17z" fill="#f4f4f4" /><path d="M5 6h3l-3 3.500h3M10.500 1H14l-3.500 4H14" stroke="#1c1c1c" strokeWidth="1" fill="none" /><path d="M11 1h4l-3.500 4H15" stroke="#f4f4f4" strokeWidth="1.100" fill="none" /></svg>
      </div>
    </footer>
  );
}

export default function App() {
  return (
    <div className={`flex h-screen w-full flex-col overflow-hidden bg-[#3b3b3b] ${UI}`}>
      <TabStrip />
      <AddressBar />
      <Bookmarks />
      <div className="mx-1 mb-[5px] flex min-h-0 flex-1 overflow-hidden rounded-lg bg-white">
        <SideNav />
        <main className="flex min-w-0 flex-1 flex-col">
          <SheetHeader />
          <Toolbar />
          <div className="flex min-h-0 flex-1">
            <Grid />
            <Rail />
          </div>
        </main>
      </div>
      <Taskbar />
    </div>
  );
}
